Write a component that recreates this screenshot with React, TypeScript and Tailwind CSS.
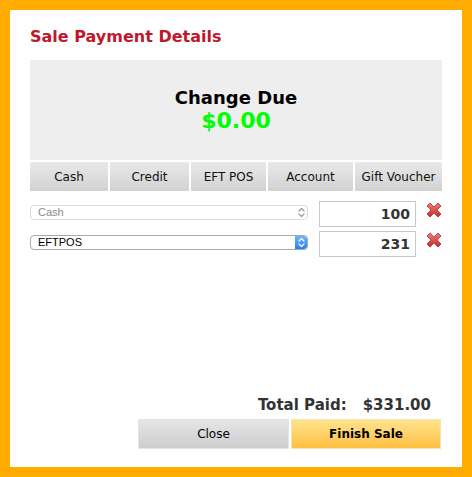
const verdana = { fontFamily: '"DejaVu Sans", Verdana, sans-serif' };

function Chevrons({ color }: { color: string }) {
  return (
    <svg width="7" height="11" viewBox="0 0 7 11" fill="none" stroke={color} strokeWidth="1.2" strokeLinecap="round" strokeLinejoin="round">
      <path d="M1 4 L3.5 1.5 L6 4" />
      <path d="M1 7 L3.5 9.5 L6 7" />
    </svg>
  );
}

function RemoveIcon() {
  return (
    <svg width="16" height="16" viewBox="0 0 16 16">
      <defs>
        <linearGradient id="xg" x1="0" y1="0" x2="0" y2="1">
          <stop offset="0" stopColor="#f27a7a" />
          <stop offset="1" stopColor="#c92a2a" />
        </linearGradient>
      </defs>
      <polygon
        points="1,4 4,1 8,5 12,1 15,4 11,8 15,12 12,15 8,11 4,15 1,12 5,8"
        fill="url(#xg)"
        stroke="#a33434"
        strokeWidth="0.8"
        strokeLinejoin="round"
      />
    </svg>
  );
}

function PaymentRow({ method, amount, active }: { method: string; amount: string; active?: boolean }) {
  return (
    <div className="flex items-start">
      {active ? (
        <div className="mt-[4px] w-[278px] h-[15px] flex items-center rounded-[4px] border border-[#a9a9a9] bg-white overflow-hidden">
          <span className="flex-1 pl-[7px] text-[11px] leading-none text-black" style={{ fontFamily: '"Liberation Sans", Arial, sans-serif' }}>
            {method}
          </span>
          <span className="w-[12px] h-full flex items-center justify-center bg-gradient-to-b from-[#6db5fb] to-[#1b7ff5] rounded-r-[3px]">
            <Chevrons color="#ffffff" />
          </span>
        </div>
      ) : (
        <div className="mt-[4px] w-[278px] h-[15px] flex items-center rounded-[4px] border border-[#dcdcdc] bg-white">
          <span className="flex-1 pl-[7px] text-[11px] leading-none text-[#8a8a8a]" style={{ fontFamily: '"Liberation Sans", Arial, sans-serif' }}>
            {method}
          </span>
          <span className="w-[12px] h-full flex items-center justify-center">
            <Chevrons color="#9a9a9a" />
          </span>
        </div>
      )}
      <div className="ml-[11px] w-[97px] h-[26px] border border-[#c8c8c8] bg-white flex items-center justify-end pr-[5px]">
        <span className="text-[14px] font-bold text-[#333333]" style={verdana}>{amount}</span>
      </div>
      <div className="ml-[10px] mt-[1px]">
        <RemoveIcon />
      </div>
    </div>
  );
}

export default function App() {
  const tabs = [
    { label: "Cash", w: "w-[78px]" },
    { label: "Credit", w: "w-[79px]" },
    { label: "EFT POS", w: "w-[75px]" },
    { label: "Account", w: "w-[85px]" },
    { label: "Gift Voucher", w: "w-[87px]" },
  ];

  return (
    <div className="w-[472px] h-[477px] bg-[#ffab00] p-[10px]" style={verdana}>
      <div className="h-full bg-white flex flex-col px-[20px] pt-[16px] pb-[18px]">
        {/* Title */}
        <h1 className="text-[16px] leading-[22px] font-bold text-[#c0182b]">Sale Payment Details</h1>

        {/* Change due */}
        <div className="mt-[12px] h-[100px] bg-[#eeeeee] flex flex-col items-center justify-center pt-[2px]">
          <div className="text-[18px] leading-[20px] font-bold text-black">Change Due</div>
          <div className="text-[22px] leading-[26px] font-bold text-[#00ff00]">$0.00</div>
        </div>

        {/* Payment type tabs */}
        <div className="mt-[2px] flex gap-[2px]">
          {tabs.map((t) => (
            <div
              key={t.label}
              className={`${t.w} h-[29px] flex items-center justify-center bg-gradient-to-b from-[#e9e9e9] to-[#d2d2d2] text-[12px] text-[#111111]`}
            >
              {t.label}
            </div>
          ))}
        </div>

        {/* Payment rows */}
        <div className="mt-[10px] flex flex-col gap-[4px]">
          <PaymentRow method="Cash" amount="100" />
          <PaymentRow method="EFTPOS" amount="231" active />
        </div>

        <div className="flex-1" />

        {/* Total */}
        <div className="flex justify-end gap-[16px] mr-[11px] text-[15px] leading-[18px] font-bold text-[#333333]">
          <span>Total Paid:</span>
          <span>$331.00</span>
        </div>

        {/* Buttons */}
        <div className="mt-[5px] flex justify-end gap-[2px] mr-[1px]">
          <button className="w-[151px] h-[30px] border border-[#e4e4e4] bg-gradient-to-b from-[#e6e6e6] to-[#cdcdcd] text-[12px] text-black">
            Close
          </button>
          <button className="w-[150px] h-[30px] border border-[#f3e4b8] bg-gradient-to-b from-[#ffe48c] to-[#ffbf3c] text-[12px] font-bold text-black">
            Finish Sale
          </button>
        </div>
      </div>
    </div>
  );
}
